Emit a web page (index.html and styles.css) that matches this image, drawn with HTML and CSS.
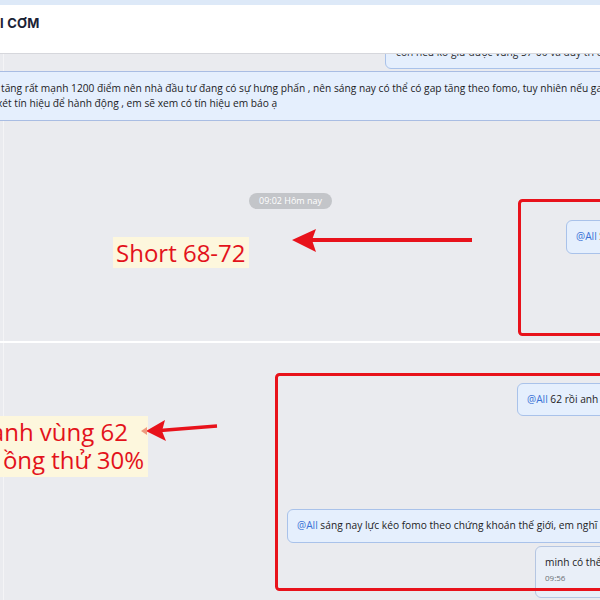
FILE: index.html
```html
<!DOCTYPE html>
<html lang="vi">
<head>
<meta charset="utf-8">
<link rel="stylesheet" href="styles.css">
</head>
<body>
<div class="page">
  <section class="shot shot-top">
    <div class="topstrip"></div>
    <header class="head">I CƠM</header>
    <div class="chat chat-top">
      <div class="bubble bubble-cut">còn nếu ko giữ được vùng 57-60 và duy trì được</div>
      <div class="bubble bubble-wide">
        <span class="line line-1">tăng rất mạnh 1200 điểm nên nhà đầu tư đang có sự hưng phấn , nên sáng nay có thể có gap tăng theo fomo, tuy nhiên nếu gap</span>
        <span class="line line-2">xét tín hiệu để hành động , em sẽ xem có tín hiệu em báo ạ</span>
      </div>
      <div class="stamp">09:02 Hôm nay</div>
      <div class="bubble bubble-all1"><span class="mention">@All</span> Short 68-72 anh em</div>
    </div>
  </section>
  <div class="divider"></div>
  <section class="shot shot-bottom">
    <div class="chat chat-bottom">
      <div class="bubble bubble-62"><span class="mention">@All</span> 62 rồi anh em ơi</div>
      <div class="bubble bubble-fomo"><span class="mention">@All</span> sáng nay lực kéo fomo theo chứng khoán thế giới, em nghĩ</div>
      <div class="bubble bubble-minh">
        <span class="msg">minh có thể</span>
        <span class="time">09:56</span>
      </div>
    </div>
  </section>

  <div class="note note-short">Short 68-72</div>
  <div class="note note-62"><span class="nl nl-1">anh vùng 62</span><span class="nl nl-2">ồng thử 30%</span></div>

  <svg class="marks" width="600" height="600" viewBox="0 0 600 600">
    <rect x="519.5" y="200.5" width="120" height="134" rx="3" fill="none" stroke="#e8121b" stroke-width="3"/>
    <line x1="472" y1="240" x2="310" y2="240" stroke="#e8121b" stroke-width="4"/>
    <polygon points="292,240 316,229 312,240 316,252" fill="#e8121b"/>
    <rect x="276.5" y="374.5" width="360" height="215" rx="3" fill="none" stroke="#e8121b" stroke-width="3"/>
    <line x1="217" y1="426" x2="160" y2="430.5" stroke="#e8121b" stroke-width="3.5"/>
    <polygon points="146,431 165,420 162,431 166,441" fill="#e8121b"/>
    <polygon points="141,431 147,427 147,435" fill="#ef9a7e"/>
  </svg>
</div>
</body>
</html>
```
FILE: styles.css
```css
* { box-sizing: border-box; }
html, body { margin: 0; padding: 0; }
body {
  width: 600px;
  height: 600px;
  overflow: hidden;
  background: #eaebef;
  font-family: "Open Sans", "Noto Sans", sans-serif;
  color: #1c1c1e;
}
.page {
  position: relative;
  width: 600px;
  height: 600px;
  overflow: hidden;
}
.shot {
  display: flex;
  flex-direction: column;
  overflow: hidden;
}
.shot-top { height: 341px; }
.shot-bottom { height: 257px; }
.topstrip {
  height: 5px;
  background: #dde9f8;
  flex: none;
}
.head {
  position: relative;
  z-index: 2;
  height: 49px;
  flex: none;
  background: #ffffff;
  border-bottom: 1px solid #d6d7dc;
  font-family: "Inter", "Open Sans", sans-serif;
  font-weight: 700;
  font-size: 13px;
  line-height: 16px;
  padding-top: 10px;
  color: #1b2336;
  letter-spacing: 0.2px;
}
.chat {
  flex: 1;
  display: flex;
  flex-direction: column;
  align-items: flex-start;
  background: linear-gradient(to right, #eaebef 3px, #f4f4f6 3px, #f4f4f6 4px, #eaebef 4px);
}
.divider {
  height: 2px;
  background: #ffffff;
}
.bubble {
  background: #e5effd;
  border: 1px solid #a9c2ea;
  border-radius: 6px;
  font-size: 10.2px;
  line-height: 15px;
  white-space: nowrap;
  flex: none;
}
.mention { color: #3a72d6; }
.bubble-cut {
  margin-top: -10px;
  margin-left: 385px;
  width: 260px;
  padding: 0 10px 8px;
  color: #2a2a2a;
}
.bubble-wide {
  margin-top: 2px;
  margin-left: -10px;
  width: 640px;
  border-radius: 0;
  border-left: none;
  border-right: none;
  border-color: #a9bde3;
  padding: 9px 0 9px;
  display: flex;
  flex-direction: column;
}
.line-1 { padding-left: 11px; }
.line-2 { padding-left: 7px; }
.stamp {
  margin-top: 72px;
  margin-left: 249px;
  height: 16px;
  padding: 0 10px;
  border-radius: 8px;
  background: #c3c5c9;
  color: #ffffff;
  font-size: 9px;
  line-height: 16px;
}
.bubble-all1 {
  margin-top: 11px;
  margin-left: 566px;
  padding: 8px 9px;
  height: 34px;
}
.bubble-62 {
  margin-top: 40px;
  margin-left: 517px;
  padding: 8px 9px;
  height: 33px;
}
.bubble-fomo {
  margin-top: 93px;
  margin-left: 287px;
  padding: 8px 9px;
  height: 34px;
}
.bubble-minh {
  margin-top: 3px;
  margin-left: 535px;
  padding: 8px 9px;
  height: 52px;
  display: flex;
  flex-direction: column;
  background: #e9eff8;
  border-color: #b5c6e2;
}
.time {
  font-size: 8px;
  line-height: 12px;
  margin-top: 2px;
  color: #6c6f75;
}
.note {
  position: absolute;
  background: #fdf7dd;
  color: #e3121b;
  font-family: "Open Sans", "Noto Sans", sans-serif;
  font-size: 24px;
  white-space: nowrap;
}
.note-short {
  left: 113px;
  top: 237px;
  height: 31px;
  line-height: 31px;
  padding: 0 3px;
}
.note-62 {
  left: 0;
  top: 416px;
  width: 148px;
  height: 61px;
  display: flex;
  flex-direction: column;
  align-items: flex-end;
  line-height: 28px;
  padding-top: 2px;
  overflow: hidden;
}
.nl-1 { margin-right: 20px; }
.nl-2 { margin-right: 4px; }
.marks {
  position: absolute;
  left: 0;
  top: 0;
  pointer-events: none;
}
```
